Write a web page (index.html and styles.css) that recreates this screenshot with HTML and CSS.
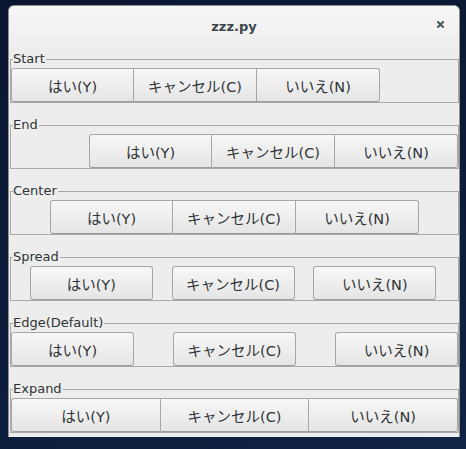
FILE: index.html
```html
<!DOCTYPE html>
<html lang="ja">
<head>
<meta charset="utf-8">
<title>zzz.py</title>
<link rel="stylesheet" href="styles.css">
</head>
<body>
<div class="window">
  <div class="titlebar">
    <span class="spacer"></span>
    <span class="title">zzz.py</span>
    <span class="close">
      <svg width="7" height="7" viewBox="0 0 7 7"><path d="M1 1L6 6M6 1L1 6" stroke="#4b5a5e" stroke-width="2" stroke-linecap="square"/></svg>
    </span>
  </div>
  <div class="content">
    <fieldset class="frame">
      <legend>Start</legend>
      <div class="row row-start linked">
        <button class="btn">はい(Y)</button><button class="btn">キャンセル(C)</button><button class="btn">いいえ(N)</button>
      </div>
    </fieldset>
    <fieldset class="frame">
      <legend>End</legend>
      <div class="row row-end linked">
        <button class="btn">はい(Y)</button><button class="btn">キャンセル(C)</button><button class="btn">いいえ(N)</button>
      </div>
    </fieldset>
    <fieldset class="frame">
      <legend>Center</legend>
      <div class="row row-center linked">
        <button class="btn">はい(Y)</button><button class="btn">キャンセル(C)</button><button class="btn">いいえ(N)</button>
      </div>
    </fieldset>
    <fieldset class="frame">
      <legend>Spread</legend>
      <div class="row row-spread">
        <button class="btn">はい(Y)</button><button class="btn">キャンセル(C)</button><button class="btn">いいえ(N)</button>
      </div>
    </fieldset>
    <fieldset class="frame">
      <legend>Edge(Default)</legend>
      <div class="row row-edge">
        <button class="btn">はい(Y)</button><button class="btn">キャンセル(C)</button><button class="btn">いいえ(N)</button>
      </div>
    </fieldset>
    <fieldset class="frame last">
      <legend>Expand</legend>
      <div class="row row-expand linked">
        <button class="btn">はい(Y)</button><button class="btn">キャンセル(C)</button><button class="btn">いいえ(N)</button>
      </div>
    </fieldset>
  </div>
</div>
</body>
</html>
```
FILE: styles.css
```css
html, body {
  margin: 0;
  padding: 0;
}
body {
  width: 466px;
  height: 449px;
  overflow: hidden;
  background: linear-gradient(160deg, #0a1630 0%, #0d1c3a 60%, #102446 100%);
  font-family: "DejaVu Sans", "Noto Sans CJK JP", sans-serif;
  color: #2e3436;
}
.window {
  box-sizing: border-box;
  margin: 5px 0 0 8px;
  width: 452px;
  height: 432px;
  background: #ededed;
  border: 1px solid #8e9090;
  border-bottom: none;
  border-radius: 6px 6px 0 0;
  display: flex;
  flex-direction: column;
}
.titlebar {
  height: 45px;
  flex: none;
  display: grid;
  grid-template-columns: 1fr auto 1fr;
  align-items: start;
  background: linear-gradient(#f6f6f6, #ededed);
  border-radius: 5px 5px 0 0;
}
.title {
  padding-top: 13px;
  font-size: 13px;
  line-height: 15px;
  font-weight: bold;
  color: #3a4548;
}
.close {
  justify-self: end;
  padding: 15px 15px 0 0;
  line-height: 0;
}
.content {
  padding: 0 0 0 1px;
}
.frame {
  margin: 0 0 14px 0;
  padding: 1px 0 0 0;
  border: 1px solid #a9a9a9;
  min-width: 0;
}
.frame.last {
  margin-bottom: 0;
}
.frame legend {
  margin-left: 2px;
  padding: 0 1px 0 0;
  font-size: 13px;
  line-height: 16px;
  color: #2e3436;
}
.row {
  display: flex;
}
.row-start { justify-content: flex-start; }
.row-end { justify-content: flex-end; }
.row-center { justify-content: center; }
.row-spread { justify-content: space-evenly; padding-right: 3px; }
.row-edge { justify-content: space-between; }
.btn {
  box-sizing: border-box;
  width: 123px;
  height: 34px;
  margin: 0;
  padding: 0;
  font-family: "DejaVu Sans", "Noto Sans CJK JP", sans-serif;
  font-size: 14.5px;
  color: #2e3436;
  background: linear-gradient(#f7f7f7, #e5e5e5);
  border: 1px solid #a6a6a6;
  border-bottom-color: #9c9c9c;
  border-radius: 3px;
}
.linked .btn {
  border-radius: 0;
}
.linked .btn + .btn {
  border-left: none;
}
.linked .btn:first-child {
  border-radius: 3px 0 0 3px;
}
.linked .btn:last-child {
  border-radius: 0 3px 3px 0;
}
.row-expand .btn {
  flex: 1 1 0;
  width: auto;
}
```
